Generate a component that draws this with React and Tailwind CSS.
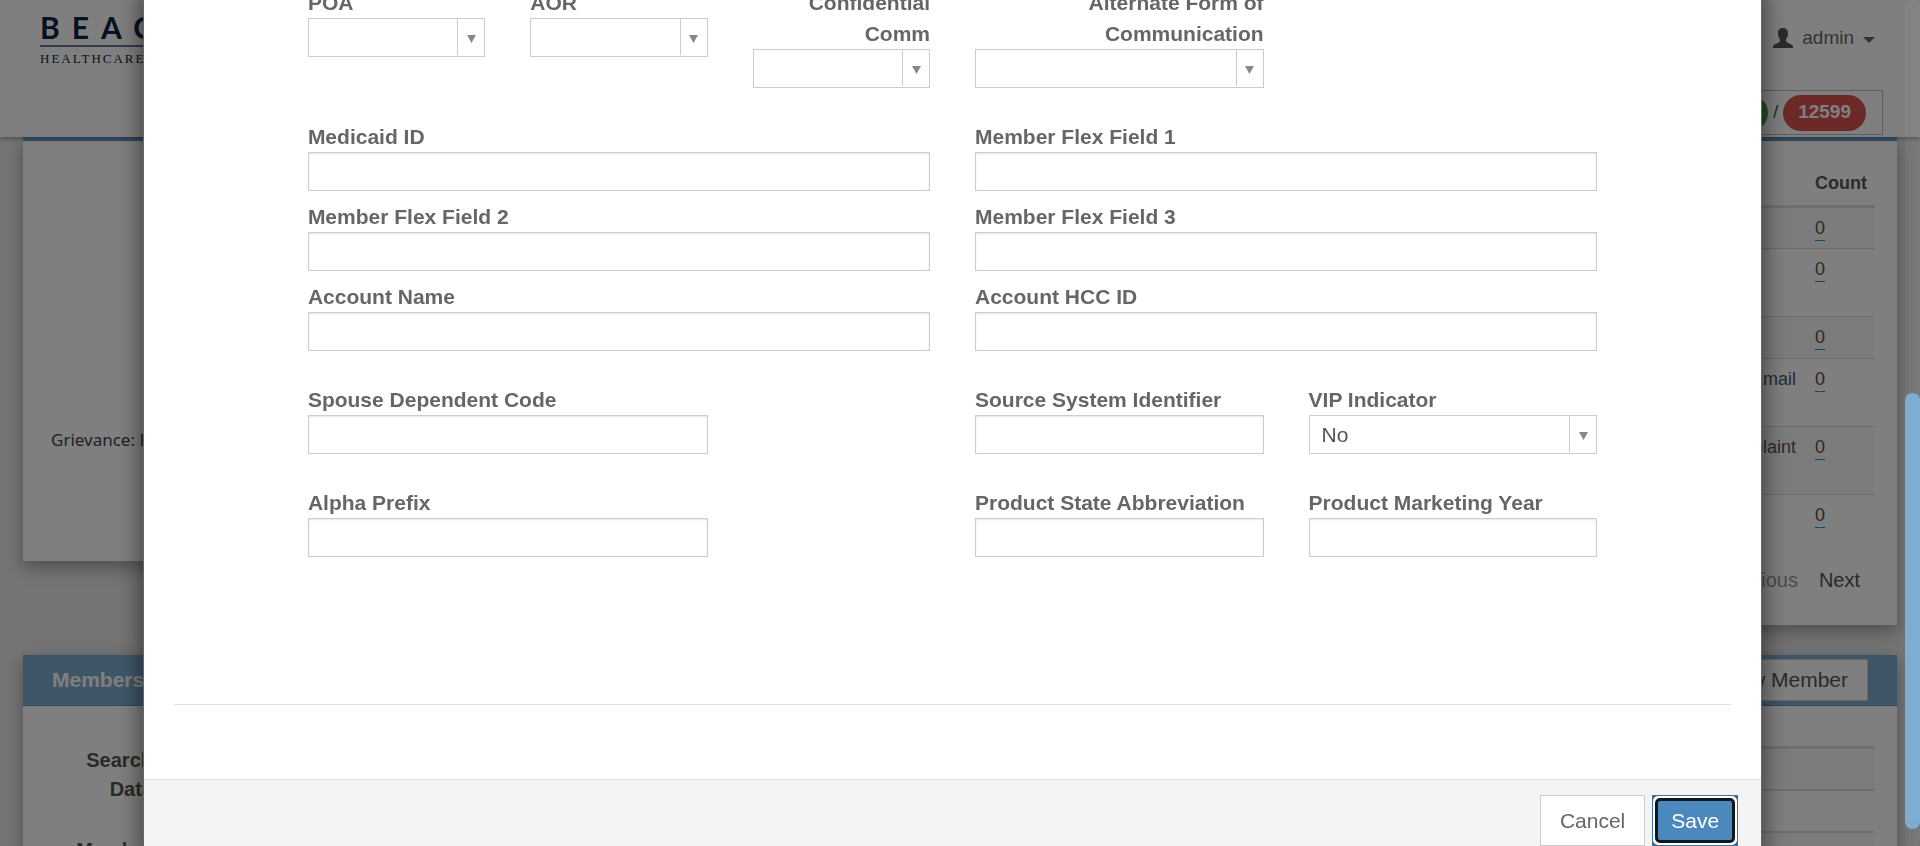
import { useId } from "react";

const labelClass = "text-[21px] leading-[31px] font-bold text-[#666]";

function TextField({ label, className }) {
  const id = useId();
  return (
    <div className={`flex flex-col ${className}`}>
      <label htmlFor={id} className={labelClass}>{label}</label>
      <input
        id={id}
        type="text"
        className="h-[39px] w-full border border-[#ccc] bg-white px-3 text-[21px] text-[#555] shadow-[inset_0_1px_2px_rgba(0,0,0,0.1)] outline-none"
      />
    </div>
  );
}

function SelectField({ label, value = "", className, labelAlign = "text-left" }) {
  const id = useId();
  return (
    <div className={`flex flex-col ${className}`}>
      <label htmlFor={id} className={`${labelClass} ${labelAlign}`}>{label}</label>
      <div className="relative">
        <select
          id={id}
          defaultValue={value}
          className="block h-[39px] w-full appearance-none border border-[#ccc] bg-white px-3 text-[21px] text-[#555] outline-none"
        >
          <option value={value}>{value}</option>
        </select>
        <span className="pointer-events-none absolute top-px right-px flex h-9 w-[27px] items-center justify-center border-l border-[#ccc]">
          <svg width="9" height="8" viewBox="0 0 9 8" className="mt-1 text-[#888]" aria-hidden="true">
            <path d="M0 0h9L4.5 8z" fill="currentColor" />
          </svg>
        </span>
      </div>
    </div>
  );
}

function Header() {
  return (
    <header className="relative z-10 flex h-[137px] items-start justify-between bg-white pr-[37px] pl-10 shadow-[0_2px_5px_rgba(0,0,0,0.3)]">
      <div className="pt-[13px] text-[#0e2348]">
        <div className="border-b-2 border-[#6d7892] pb-1 font-['Lato'] text-[30px] leading-[28px] font-bold tracking-[12px]">BEACON</div>
        <div className="pt-1 font-['Liberation_Serif'] text-[13px] leading-[15px] tracking-[2px]">HEALTHCARE SYSTEMS</div>
      </div>
      <div className="flex flex-col items-end">
        <button type="button" className="mt-[22px] mr-2 flex h-8 items-center text-[19px] text-[#666]">
          <svg width="20" height="20" viewBox="0 0 20 20" className="mr-[9px] text-[#555]" aria-hidden="true">
            <path d="M10 0C6.800 0 5 2 5 5.300C5 8 5.600 9.800 7 11.400V12.600C7 13.700 6.300 14.200 5.200 14.700L1.600 16.600C.4 17.300 0 18 0 19.200V20H20V19.200C20 18 19.600 17.300 18.400 16.600L14.800 14.700C13.700 14.200 13 13.700 13 12.600V11.400C14.400 9.800 15 8 15 5.300C15 2 13.200 0 10 0Z" fill="currentColor" />
          </svg>
          admin
          <svg width="12" height="6" viewBox="0 0 12 6" className="mt-1 ml-[9px]" aria-hidden="true">
            <path d="M0 0h12L6 6z" fill="currentColor" />
          </svg>
        </button>
        <div className="mt-9 flex h-[45px] items-center gap-[5px] border border-[#bbb] px-4 text-[19px] text-[#555]">
          <span className="flex h-9 items-center rounded-full bg-[#449d44] px-[15px] font-bold text-white">12599</span>
          /
          <span className="flex h-9 items-center rounded-full bg-[#d9534f] px-[15px] font-bold text-white">12599</span>
        </div>
      </div>
    </header>
  );
}

const reportRows = [
  { name: "", height: "h-[42px]" },
  { name: "", height: "h-[68px]" },
  { name: "", height: "h-[42px]" },
  { name: "Email", height: "h-[68px]" },
  { name: "Complaint", height: "h-[68px]" },
  { name: "", height: "h-[42px]" },
];

function Dashboard() {
  return (
    <div className="flex flex-col" aria-hidden="true">
      <Header />
      <main className="flex flex-col gap-[30px] px-[23px]">
        <div className="flex items-start gap-11">
          <section className="flex h-[424px] flex-1 flex-col border-t-4 border-[#6fa3cf] bg-white pt-[287px] pl-7 shadow-[0_6px_18px_rgba(0,0,0,0.35)]">
            <p className="font-['Noto_Sans'] text-[17px] leading-6 text-[#444]">Grievance: Part C</p>
          </section>
          <section className="flex h-[488px] flex-1 flex-col border-t-4 border-[#6fa3cf] bg-white px-[22px] pt-5 shadow-[0_6px_18px_rgba(0,0,0,0.35)]">
            <table className="w-full border-collapse text-[18px] leading-[26px] text-[#555]">
              <thead>
                <tr className="h-[45px] border-b-[3px] border-[#ddd]">
                  <th className="py-2 pr-[11px] text-right"></th>
                  <th className="w-[67px] px-2 py-2 text-left font-bold text-[#555]">Count</th>
                </tr>
              </thead>
              <tbody>
                {reportRows.map((row, i) => (
                  <tr key={i} className={`${row.height} border-[#d8d8d8] align-top not-last:border-b odd:bg-[#f9f9f9]`}>
                    <td className="py-[7px] pr-[11px] text-right">{row.name}</td>
                    <td className="px-2 py-[7px]">
                      <a href="#count" className="inline-block border-b border-dashed border-[#0088cc] leading-[23px]">0</a>
                    </td>
                  </tr>
                ))}
              </tbody>
            </table>
            <nav className="mt-[30px] flex justify-end gap-[21px] pr-[15px] text-[20px] leading-7 text-[#555]">
              <button type="button" className="text-[#999]">Previous</button>
              <button type="button">Next</button>
            </nav>
          </section>
        </div>
        <section className="bg-white shadow-[0_6px_18px_rgba(0,0,0,0.35)]">
          <div className="flex h-[51px] items-center justify-between border-b border-[#5f90ba] bg-[#7eacd3] pr-[29px] pl-[29px]">
            <h2 className="text-[21px] font-bold text-white">Members</h2>
            <button type="button" className="h-[42px] border border-[#ccc] bg-white px-[19px] text-[21px] text-[#555]">New Member</button>
          </div>
          <div className="flex gap-11 pt-10 pr-[22px] pl-[50px]">
            <div className="flex w-20 flex-col gap-8 text-right text-[20px] leading-[29px] font-bold text-[#555]">
              <span>Search Data</span>
              <span>Member</span>
            </div>
            <div className="flex flex-1 flex-col border-t-[3px] border-[#ddd]">
              <div className="h-[42px] border-b-2 border-[#ddd] bg-[#f9f9f9]" />
              <div className="h-[42px] border-b-2 border-[#ddd]" />
              <div className="h-[42px] border-b-2 border-[#ddd] bg-[#f9f9f9]" />
            </div>
          </div>
        </section>
      </main>
    </div>
  );
}

function MemberDialog() {
  return (
    <div role="dialog" aria-label="Member" className="-mt-[13px] w-[85%] border-x border-black/60 bg-white shadow-[0_0_24px_rgba(0,0,0,0.6)]">
      <form className="flex flex-col gap-[33px] px-[164px]">
        <div className="grid grid-cols-12 items-start gap-x-[45px]">
          <SelectField label="POA" className="col-span-2" />
          <SelectField label="AOR" className="col-span-2" />
          <SelectField label="Confidential Comm" className="col-span-2" labelAlign="text-right" />
          <SelectField label="Alternate Form of Communication" className="col-span-3" labelAlign="text-right" />
        </div>
        <div className="grid grid-cols-12 gap-x-[45px] gap-y-[10px]">
          <TextField label="Medicaid ID" className="col-span-6" />
          <TextField label="Member Flex Field 1" className="col-span-6" />
          <TextField label="Member Flex Field 2" className="col-span-6" />
          <TextField label="Member Flex Field 3" className="col-span-6" />
          <TextField label="Account Name" className="col-span-6" />
          <TextField label="Account HCC ID" className="col-span-6" />
        </div>
        <div className="grid grid-cols-12 gap-x-[45px]">
          <TextField label="Spouse Dependent Code" className="col-span-4" />
          <TextField label="Source System Identifier" className="col-span-3 col-start-7" />
          <SelectField label="VIP Indicator" value="No" className="col-span-3" />
        </div>
        <div className="grid grid-cols-12 gap-x-[45px]">
          <TextField label="Alpha Prefix" className="col-span-4" />
          <TextField label="Product State Abbreviation" className="col-span-3 col-start-7" />
          <TextField label="Product Marketing Year" className="col-span-3" />
        </div>
      </form>
      <hr className="mx-[30px] mt-[147px] border-[#e0e0e0]" />
      <footer className="mt-[74px] flex justify-end gap-[7px] border-t border-[#ddd] bg-[#f4f4f4] px-[23px] py-[15px] text-[21px]">
        <button type="button" className="h-[51px] border border-[#ccc] bg-white px-[19px] text-[#666]">Cancel</button>
        <button type="button" className="h-[51px] border border-[#3a74a8] bg-[#2a6496] text-white outline-none">
          <span className="block h-full rounded-[5px] border-2 border-white bg-white">
            <span className="flex h-full items-center rounded-[5px] border-[3px] border-[#10161c] bg-[#4b88bd] px-[13px]">Save</span>
          </span>
        </button>
      </footer>
    </div>
  );
}

export default function App() {
  return (
    <div className="relative h-screen overflow-hidden bg-[#eaeaea] font-['Liberation_Sans',sans-serif]">
      <Dashboard />
      <div className="fixed inset-0 z-20 flex overflow-hidden bg-black/50">
        <div className="flex flex-1 items-start justify-center">
          <MemberDialog />
        </div>
        <div className="flex h-screen w-[15px] flex-col rounded-full bg-white/3 pt-[393px] pb-[17px]">
          <div className="flex-1 rounded-full bg-[#7eacd3]" />
        </div>
      </div>
    </div>
  );
}
